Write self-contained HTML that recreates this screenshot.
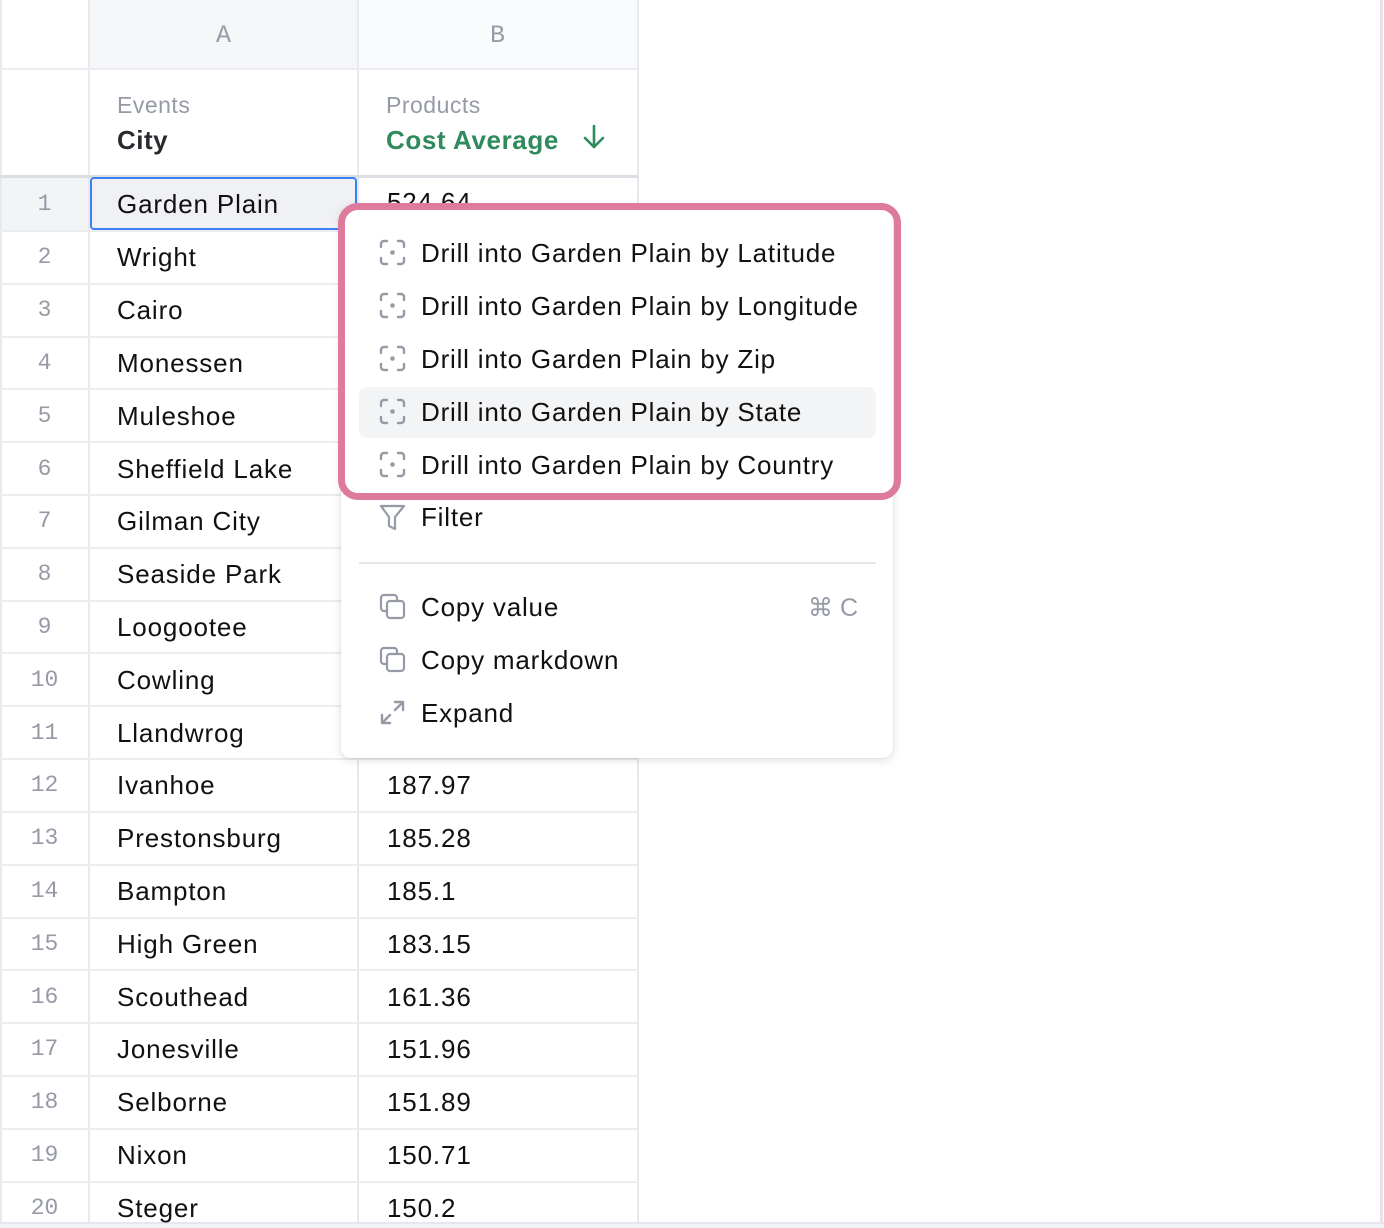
<!DOCTYPE html>
<html><head><meta charset="utf-8"><style>
*{box-sizing:border-box;margin:0;padding:0}
body{width:1384px;height:1228px;background:#fff;position:relative;overflow:hidden;font-family:"Liberation Sans",sans-serif;color:#111;}
.abs{position:absolute}
.vl{position:absolute;top:0;width:2px;background:#e8e9ee}
.hl{position:absolute;left:0;width:638px;height:2px;background:#ecedf1}
.num{position:absolute;left:0;width:89px;text-align:center;font-family:"Liberation Mono",monospace;font-size:23px;color:#959aa6}
.ca{position:absolute;left:117px;font-size:26px;letter-spacing:0.85px;color:#111;margin-top:-1px}
.cb{position:absolute;left:387px;font-size:26px;letter-spacing:0.85px;color:#111;margin-top:-1px}
.item{position:absolute;left:359px;width:517px;height:52px}
.item .t{position:absolute;left:62px;top:11px;font-size:26px;letter-spacing:0.8px;color:#111;white-space:nowrap}
.item svg{position:absolute;left:20px;top:12px}
</style></head><body>
<div class="abs" style="left:89px;top:0;width:269px;height:69px;background:#f5f6f8"></div>
<div class="abs" style="left:358px;top:0;width:280px;height:69px;background:#fafbfc"></div>
<div class="abs" style="left:0;top:178px;width:89px;height:53px;background:#f3f4f6"></div>
<div class="vl" style="left:0;height:1222px"></div>
<div class="vl" style="left:88px;height:1222px"></div>
<div class="vl" style="left:357px;height:1222px"></div>
<div class="vl" style="left:637px;height:1222px"></div>
<div class="abs" style="left:1380px;top:0;width:3px;height:1222px;background:#e9e2ee"></div>
<div class="abs" style="left:0;top:1222px;width:1384px;height:6px;background:#f1f2f5;border-top:2px solid #e6e6ee"></div>
<div class="hl" style="top:68px"></div>
<div class="hl" style="top:175px;height:3px;background:#dcdee4"></div>
<div class="abs" style="left:216px;top:21px;font-family:'Liberation Mono',monospace;font-size:25px;color:#969ba8">A</div>
<div class="abs" style="left:490px;top:21px;font-family:'Liberation Mono',monospace;font-size:25px;color:#969ba8">B</div>
<div class="abs" style="left:117px;top:92px;font-size:23px;letter-spacing:0.5px;color:#959aa6">Events</div>
<div class="abs" style="left:117px;top:125px;font-size:26px;letter-spacing:0.5px;font-weight:bold;color:#2a2a30">City</div>
<div class="abs" style="left:386px;top:92px;font-size:23px;letter-spacing:0.5px;color:#959aa6">Products</div>
<div class="abs" style="left:386px;top:125px;font-size:26px;letter-spacing:0.6px;font-weight:bold;color:#2f8a5c">Cost Average</div>
<svg class="abs" style="left:581px;top:123px" width="26" height="28" viewBox="0 0 26 28"><path d="M13 3V24M4 15l9 9 9-9" fill="none" stroke="#2f8a5c" stroke-width="2.6" stroke-linecap="round" stroke-linejoin="round"/></svg>

<div class="hl" style="top:230px"></div><div class="hl" style="top:283px"></div><div class="hl" style="top:336px"></div><div class="hl" style="top:388px"></div><div class="hl" style="top:441px"></div><div class="hl" style="top:494px"></div><div class="hl" style="top:547px"></div><div class="hl" style="top:600px"></div><div class="hl" style="top:652px"></div><div class="hl" style="top:705px"></div><div class="hl" style="top:758px"></div><div class="hl" style="top:811px"></div><div class="hl" style="top:864px"></div><div class="hl" style="top:917px"></div><div class="hl" style="top:969px"></div><div class="hl" style="top:1022px"></div><div class="hl" style="top:1075px"></div><div class="hl" style="top:1128px"></div><div class="hl" style="top:1181px"></div>

<div class="abs" style="left:90px;top:177px;width:267px;height:53px;border:2.5px solid #3b82f6;border-radius:4px;background:#f0f1f5"></div>

<div class="num" style="top:191px">1</div><div class="ca" style="top:190px">Garden Plain</div><div class="cb" style="top:188px">524.64</div>
<div class="num" style="top:244px">2</div><div class="ca" style="top:243px">Wright</div>
<div class="num" style="top:297px">3</div><div class="ca" style="top:296px">Cairo</div>
<div class="num" style="top:350px">4</div><div class="ca" style="top:349px">Monessen</div>
<div class="num" style="top:403px">5</div><div class="ca" style="top:402px">Muleshoe</div>
<div class="num" style="top:456px">6</div><div class="ca" style="top:455px">Sheffield Lake</div>
<div class="num" style="top:508px">7</div><div class="ca" style="top:507px">Gilman City</div>
<div class="num" style="top:561px">8</div><div class="ca" style="top:560px">Seaside Park</div>
<div class="num" style="top:614px">9</div><div class="ca" style="top:613px">Loogootee</div>
<div class="num" style="top:667px">10</div><div class="ca" style="top:666px">Cowling</div>
<div class="num" style="top:720px">11</div><div class="ca" style="top:719px">Llandwrog</div>
<div class="num" style="top:772px">12</div><div class="ca" style="top:771px">Ivanhoe</div><div class="cb" style="top:771px">187.97</div>
<div class="num" style="top:825px">13</div><div class="ca" style="top:824px">Prestonsburg</div><div class="cb" style="top:824px">185.28</div>
<div class="num" style="top:878px">14</div><div class="ca" style="top:877px">Bampton</div><div class="cb" style="top:877px">185.1</div>
<div class="num" style="top:931px">15</div><div class="ca" style="top:930px">High Green</div><div class="cb" style="top:930px">183.15</div>
<div class="num" style="top:984px">16</div><div class="ca" style="top:983px">Scouthead</div><div class="cb" style="top:983px">161.36</div>
<div class="num" style="top:1036px">17</div><div class="ca" style="top:1035px">Jonesville</div><div class="cb" style="top:1035px">151.96</div>
<div class="num" style="top:1089px">18</div><div class="ca" style="top:1088px">Selborne</div><div class="cb" style="top:1088px">151.89</div>
<div class="num" style="top:1142px">19</div><div class="ca" style="top:1141px">Nixon</div><div class="cb" style="top:1141px">150.71</div>
<div class="num" style="top:1195px">20</div><div class="ca" style="top:1194px">Steger</div><div class="cb" style="top:1194px">150.2</div>

<div class="abs" style="left:341px;top:206px;width:552px;height:552px;background:#fff;border-radius:10px;box-shadow:0 2px 10px rgba(0,0,0,0.13),0 0 1px rgba(0,0,0,0.2)"></div>
<div class="abs" style="left:359px;top:387px;width:517px;height:51px;background:#f3f4f6;border-radius:8px"></div>

<svg width="0" height="0" style="position:absolute"><defs>
<g id="drill"><path d="M2 8V5a3 3 0 0 1 3-3h3M19 2h3a3 3 0 0 1 3 3v3M25 19v3a3 3 0 0 1-3 3h-3M8 25H5a3 3 0 0 1-3-3v-3" fill="none" stroke="#959aa6" stroke-width="2.4" stroke-linecap="round"/><circle cx="13.5" cy="13.5" r="2.3" fill="#959aa6"/></g>
<g id="copy"><rect x="2" y="2" width="16" height="16" rx="3" fill="none" stroke="#959aa6" stroke-width="2.2"/><rect x="8" y="8" width="17" height="17" rx="3" fill="#fff" stroke="#959aa6" stroke-width="2.2"/></g>
</defs></svg>

<div class="item" style="top:227px"><svg width="27" height="27"><use href="#drill"/></svg><div class="t">Drill into Garden Plain by Latitude</div></div>
<div class="item" style="top:280px"><svg width="27" height="27"><use href="#drill"/></svg><div class="t">Drill into Garden Plain by Longitude</div></div>
<div class="item" style="top:333px"><svg width="27" height="27"><use href="#drill"/></svg><div class="t">Drill into Garden Plain by Zip</div></div>
<div class="item" style="top:386px"><svg width="27" height="27"><use href="#drill"/></svg><div class="t">Drill into Garden Plain by State</div></div>
<div class="item" style="top:439px"><svg width="27" height="27"><use href="#drill"/></svg><div class="t">Drill into Garden Plain by Country</div></div>
<div class="item" style="top:491px"><svg width="27" height="30"><path d="M2 3h23l-9 11v12l-6-3v-9z" fill="none" stroke="#959aa6" stroke-width="2.2" stroke-linejoin="round"/></svg><div class="t">Filter</div></div>
<div class="abs" style="left:359px;top:562px;width:517px;height:2px;background:#e5e7eb"></div>
<div class="item" style="top:581px"><svg width="27" height="27"><use href="#copy"/></svg><div class="t">Copy value</div><div class="abs" style="right:18px;top:12px;font-size:25px;color:#959aa6">⌘ C</div></div>
<div class="item" style="top:634px"><svg width="27" height="27"><use href="#copy"/></svg><div class="t">Copy markdown</div></div>
<div class="item" style="top:687px"><svg width="27" height="27"><path d="M16 3h8v8M24 3l-8 8M11 24H3v-8M3 24l8-8" fill="none" stroke="#959aa6" stroke-width="2.4" stroke-linecap="round" stroke-linejoin="round"/></svg><div class="t">Expand</div></div>

<div class="abs" style="left:338px;top:203px;width:563px;height:297px;border:7px solid #de7a9b;border-radius:20px"></div>
</body></html>
